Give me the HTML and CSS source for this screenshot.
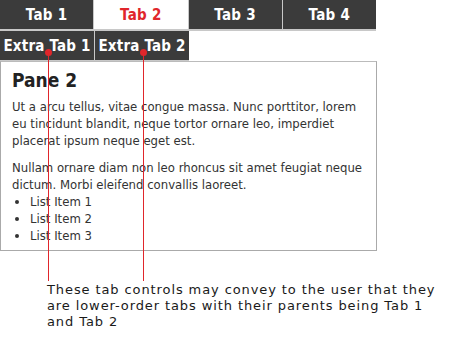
FILE: index.html
```html
<!DOCTYPE html>
<html>
<head>
<meta charset="utf-8">
<link rel="stylesheet" href="styles.css">
</head>
<body>
<div class="page">
  <div class="tabs">
    <div class="tab">Tab 1</div>
    <div class="tab active">Tab 2</div>
    <div class="tab">Tab 3</div>
    <div class="tab">Tab 4</div>
  </div>
  <div class="subtabs">
    <div class="subtab">Extra Tab 1</div>
    <div class="subtab">Extra Tab 2</div>
  </div>
  <div class="pane">
    <h2 class="pane-title">Pane 2</h2>
    <p class="pane-text">Ut a arcu tellus, vitae congue massa. Nunc porttitor, lorem eu tincidunt blandit, neque tortor ornare leo, imperdiet placerat ipsum neque eget est.</p>
    <p class="pane-text">Nullam ornare diam non leo rhoncus sit amet feugiat neque dictum. Morbi eleifend convallis laoreet.</p>
    <ul class="pane-list">
      <li>List Item 1</li>
      <li>List Item 2</li>
      <li>List Item 3</li>
    </ul>
  </div>
  <p class="caption">These tab controls may convey to the user that they are lower-order tabs with their parents being Tab 1 and Tab 2</p>
  <div class="pointer p1"><span class="dot"></span></div>
  <div class="pointer p2"><span class="dot"></span></div>
</div>
</body>
</html>
```

FILE: styles.css
```css
html, body {
  margin: 0;
  padding: 0;
  background: #fff;
}
.page {
  position: relative;
  width: 474px;
  height: 340px;
  font-family: "DejaVu Sans Condensed", "DejaVu Sans", sans-serif;
}
.tabs {
  display: flex;
  width: 376px;
  gap: 1px;
  background: #c8c8c8;
  border-bottom: 2px solid #c8c8c8;
}
.tab {
  flex: 1;
  height: 29px;
  line-height: 31px;
  text-align: center;
  background: #3b3b3b;
  color: #fff;
  font-weight: bold;
  font-size: 15px;
  letter-spacing: 0.3px;
}
.tab.active {
  background: #fff;
  color: #e0262b;
}
.subtabs {
  display: flex;
  gap: 1px;
  width: 189px;
  background: #c8c8c8;
  border-bottom: 1px solid #c8c8c8;
}
.subtab {
  flex: 1;
  height: 29px;
  line-height: 30px;
  text-align: center;
  background: #3b3b3b;
  color: #fff;
  font-weight: bold;
  font-size: 15px;
  letter-spacing: 0.2px;
}
.pane {
  width: 353px;
  height: 169px;
  border: 1px solid #aaa;
  border-top-color: #bbb;
  padding: 6px 11px 13px 11px;
  color: #333;
}
.pane-title {
  margin: 0 0 6px 0;
  font-size: 19px;
  font-weight: bold;
  line-height: 24px;
  color: #222;
}
.pane-text {
  margin: 0 0 10px 0;
  font-size: 13px;
  line-height: 17px;
}
.pane-list {
  margin: -10px 0 0 0;
  padding-left: 18px;
  font-size: 13px;
  line-height: 17px;
}
.caption {
  margin: 0;
  position: absolute;
  left: 47px;
  top: 282px;
  width: 400px;
  font-family: "DejaVu Sans", sans-serif;
  font-size: 13px;
  letter-spacing: 0.9px;
  line-height: 16px;
  color: #1a1a1a;
}
.pointer {
  position: absolute;
  top: 52px;
  width: 1px;
  height: 229px;
  background: #e0262b;
}
.p1 { left: 48px; }
.p2 { left: 143px; }
.dot {
  position: absolute;
  left: -3px;
  top: -3px;
  width: 7px;
  height: 7px;
  border-radius: 50%;
  background: #e0262b;
}
```
